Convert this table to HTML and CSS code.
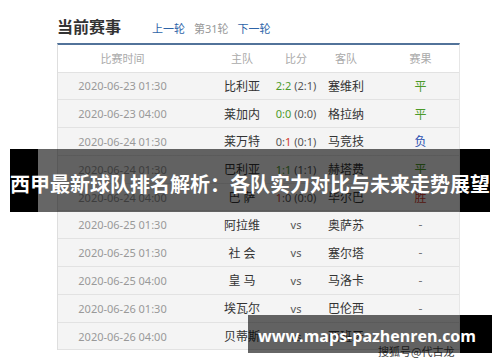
FILE: index.html
```html
<!DOCTYPE html>
<html lang="zh-CN">
<head>
<meta charset="utf-8">
<title>当前赛事</title>
<link rel="stylesheet" href="styles.css">
</head>
<body>
<div class="page">
  <div class="head">
    <h2 class="title">当前赛事</h2>
    <nav class="rounds"><span class="link">上一轮</span><span class="cur">第31轮</span><span class="link">下一轮</span></nav>
  </div>
  <div class="table">
    <div class="row th"><div>比赛时间</div><div class="home">主队</div><div>比分</div><div>客队</div><div class="res">赛果</div></div>
    <div class="row"><div class="date">2020-06-23 01:30</div><div class="home">比利亚</div><div class="score"><span class="g">2:2</span> (2:1)</div><div>塞维利</div><div class="res g">平</div></div>
    <div class="row"><div class="date">2020-06-23 04:00</div><div class="home">莱加内</div><div class="score"><span class="g">0:0</span> (0:0)</div><div>格拉纳</div><div class="res g">平</div></div>
    <div class="row"><div class="date">2020-06-24 01:30</div><div class="home">莱万特</div><div class="score">0:<span class="r">1</span> (0:1)</div><div>马竞技</div><div class="res b">负</div></div>
    <div class="row"><div class="date">2020-06-24 01:30</div><div class="home">巴利亚</div><div class="score"><span class="g">1:1</span> (1:1)</div><div>赫塔费</div><div class="res g">平</div></div>
    <div class="row"><div class="date">2020-06-24 04:00</div><div class="home">巴 萨</div><div class="score"><span class="r">1</span>:0 (0:0)</div><div>毕尔巴</div><div class="res r">胜</div></div>
    <div class="row"><div class="date">2020-06-25 01:30</div><div class="home">阿拉维</div><div class="score vs">vs</div><div>奥萨苏</div><div class="res dash">-</div></div>
    <div class="row"><div class="date">2020-06-25 01:30</div><div class="home">社 会</div><div class="score vs">vs</div><div>塞尔塔</div><div class="res dash">-</div></div>
    <div class="row"><div class="date">2020-06-25 04:00</div><div class="home">皇 马</div><div class="score vs">vs</div><div>马洛卡</div><div class="res dash">-</div></div>
    <div class="row"><div class="date">2020-06-26 01:30</div><div class="home">埃瓦尔</div><div class="score vs">vs</div><div>巴伦西</div><div class="res dash">-</div></div>
    <div class="row"><div class="date">2020-06-26 04:00</div><div class="home">贝蒂斯</div><div class="score vs">vs</div><div>西班牙</div><div class="res dash">-</div></div>
  </div>
</div>
<div class="banner"><span class="banner-text">西甲最新球队排名解析：各队实力对比与未来走势展望</span></div>
<div class="mark">搜狐号@代古龙</div>
<div class="site">www.maps-pazhenren.com</div>
</body>
</html>
```

FILE: styles.css
```css
body {
  margin: 0;
  width: 500px;
  height: 362px;
  overflow: hidden;
  background: #fff;
  position: relative;
  font-family: "Noto Sans", "Noto Sans CJK SC", sans-serif;
}

.page {
  padding: 16px 0 0 57px;
}

.head {
  display: flex;
  align-items: baseline;
  height: 27px;
}

.title {
  margin: 0;
  font-family: "Noto Sans CJK SC", sans-serif;
  font-size: 16px;
  font-weight: bold;
  line-height: 20px;
  color: #333;
}

.rounds {
  display: flex;
  gap: 9px;
  margin-left: 31px;
  font-size: 11px;
}

.link { color: #2e64a8; }
.cur { color: #999; }

.table {
  width: 403px;
  box-sizing: border-box;
  border-left: 1px solid #dedede;
  border-right: 1px solid #e6e6e6;
  border-top: 2px solid #52739a;
}

.row {
  display: grid;
  grid-template-columns: 129px 85px 48px 52px 87px;
  align-items: center;
  height: 27.8px;
  box-sizing: border-box;
  border-bottom: 1px solid #e2e2e2;
  background: #f4f4f4;
  text-align: center;
  font-size: 12px;
  color: #333;
  white-space: nowrap;
}

.row.th {
  height: 27.5px;
  background: #fff;
  color: #aaa;
  font-size: 11px;
}

.home { padding-left: 25px; }
.res { padding-left: 10px; }

.date {
  font-size: 11px;
  color: #999;
}

.score {
  font-size: 11px;
  color: #555;
}

.vs { color: #555; }
.dash { color: #777; }

.g { color: #4c9a2a; }
.r { color: #d23a2a; }
.b { color: #2b4fb0; }

.banner {
  position: absolute;
  left: 10px;
  top: 149px;
  width: 480px;
  height: 63px;
  box-sizing: border-box;
  padding-top: 25px;
  background: linear-gradient(90deg, #000 0 28px, rgba(0, 0, 0, 0.6) 28px 450px, #000 450px);
  text-align: center;
}

.banner-text {
  display: block;
  font-family: "Noto Sans CJK SC", sans-serif;
  font-size: 20px;
  font-weight: bold;
  line-height: 20px;
  color: #fff;
  white-space: nowrap;
}

.mark {
  position: absolute;
  left: 378px;
  top: 345px;
  font-family: "Noto Sans CJK SC", sans-serif;
  font-size: 11px;
  line-height: 12px;
  color: #444;
  white-space: nowrap;
}

.site {
  position: absolute;
  left: 248px;
  top: 315px;
  width: 244px;
  height: 38px;
  box-sizing: border-box;
  padding: 10px 0 0 10px;
  background: linear-gradient(90deg, rgba(0, 0, 0, 0.6) 0 212px, #000 212px);
  font-family: "Open Sans", sans-serif;
  font-size: 16px;
  font-weight: bold;
  line-height: 22px;
  color: #fff;
  white-space: nowrap;
}
```
